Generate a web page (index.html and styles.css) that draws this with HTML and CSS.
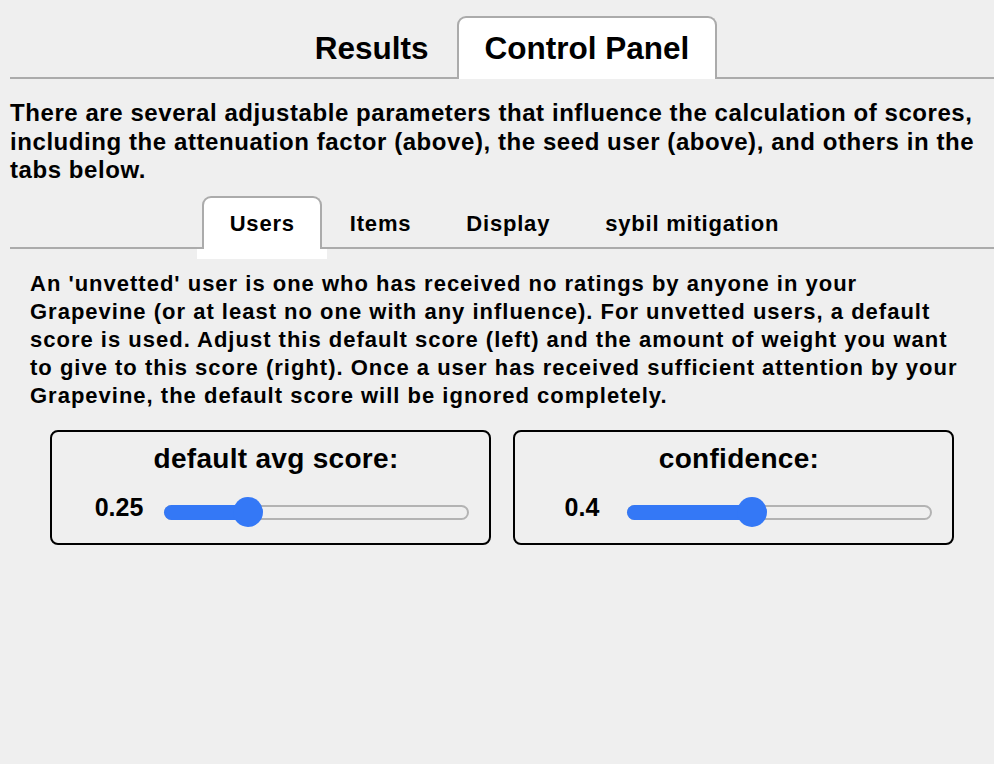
FILE: index.html
```html
<!DOCTYPE html>
<html lang="en">
<head>
<meta charset="utf-8">
<title>Control Panel</title>
<link rel="stylesheet" href="styles.css">
</head>
<body>
<div class="page">
  <nav class="tabs main-tabs">
    <span class="tab">Results</span>
    <span class="tab active">Control Panel</span>
  </nav>
  <p class="intro">There are several adjustable parameters that influence the calculation of scores, including the attenuation factor (above), the seed user (above), and others in the tabs below.</p>
  <nav class="tabs sub-tabs">
    <span class="tab active">Users</span>
    <span class="tab">Items</span>
    <span class="tab">Display</span>
    <span class="tab">sybil mitigation</span>
  </nav>
  <section class="panel">
    <p class="desc">An 'unvetted' user is one who has received no ratings by anyone in your Grapevine (or at least no one with any influence). For unvetted users, a default score is used. Adjust this default score (left) and the amount of weight you want to give to this score (right). Once a user has received sufficient attention by your Grapevine, the default score will be ignored completely.</p>
    <div class="cards">
      <div class="card">
        <div class="card-title">default avg score:</div>
        <div class="slider-row">
          <span class="value">0.25</span>
          <div class="slider" role="slider" aria-valuenow="0.25" aria-valuemin="0" aria-valuemax="1" style="--v:0.25">
            <span class="fill"></span>
            <span class="thumb"></span>
          </div>
        </div>
      </div>
      <div class="card">
        <div class="card-title">confidence:</div>
        <div class="slider-row">
          <span class="value">0.4</span>
          <div class="slider" role="slider" aria-valuenow="0.4" aria-valuemin="0" aria-valuemax="1" style="--v:0.4">
            <span class="fill"></span>
            <span class="thumb"></span>
          </div>
        </div>
      </div>
    </div>
  </section>
</div>
</body>
</html>
```
FILE: styles.css
```css
html, body {
  margin: 0;
  padding: 0;
  background: #efefef;
}

body {
  font-family: "Liberation Sans", Arial, sans-serif;
  font-weight: bold;
  color: #000;
}

.page {
  padding: 16px 0 0 10px;
}

.tabs {
  display: flex;
  justify-content: center;
  border-bottom: 2px solid #ababab;
}

.tab {
  position: relative;
  display: flex;
  align-items: center;
  box-sizing: border-box;
  padding: 0 26px;
  margin-bottom: -2px;
  border: 2px solid transparent;
  border-bottom: none;
  border-radius: 9px 9px 0 0;
  white-space: nowrap;
}

.tab.active {
  background: #fff;
  border-color: #ababab;
}

.main-tabs .tab {
  height: 63px;
  font-size: 31.5px;
}

.sub-tabs {
  padding-left: 4px;
}

.sub-tabs .tab {
  height: 53px;
  padding: 2px 25px 0 26px;
  font-size: 22px;
  letter-spacing: 0.8px;
}

.sub-tabs .tab.active::after {
  content: "";
  position: absolute;
  left: -7px;
  right: -7px;
  top: 100%;
  height: 10px;
  background: #fff;
}

.intro {
  margin: 20px 0 11px;
  font-size: 24px;
  line-height: 28.5px;
  letter-spacing: 0.57px;
}

.panel {
  padding: 21px 20px 0;
}

.desc {
  margin: 0;
  font-size: 22px;
  line-height: 28px;
  letter-spacing: 1px;
}

.cards {
  display: flex;
  gap: 22px;
  margin-top: 20px;
  padding-left: 20px;
}

.card {
  box-sizing: border-box;
  width: 441px;
  height: 115px;
  border: 2px solid #000;
  border-radius: 8px;
  padding: 11px 0 14px;
}

.card-title {
  padding-left: 11px;
  text-align: center;
  font-size: 28px;
  line-height: 32px;
  letter-spacing: 0.3px;
}

.slider-row {
  display: flex;
  align-items: center;
  height: 32px;
  margin-top: 22px;
  padding-left: 32px;
}

.value {
  width: 70px;
  text-align: center;
  font-size: 25px;
  margin: 0 10px 10px 0;
}

.slider {
  position: relative;
  box-sizing: border-box;
  width: 305px;
  height: 15px;
  border: 2px solid #b3b3b3;
  border-radius: 8px;
  background: #efefef;
}

.fill {
  position: absolute;
  left: -2px;
  top: -2px;
  height: 15px;
  width: calc(var(--v) * (100% - 26px) + 15px);
  border-radius: 8px 0 0 8px;
  background: #3478f6;
}

.thumb {
  position: absolute;
  top: -10px;
  left: calc(var(--v) * (100% - 26px) - 2px);
  width: 30px;
  height: 30px;
  border-radius: 50%;
  background: #3478f6;
}
```
